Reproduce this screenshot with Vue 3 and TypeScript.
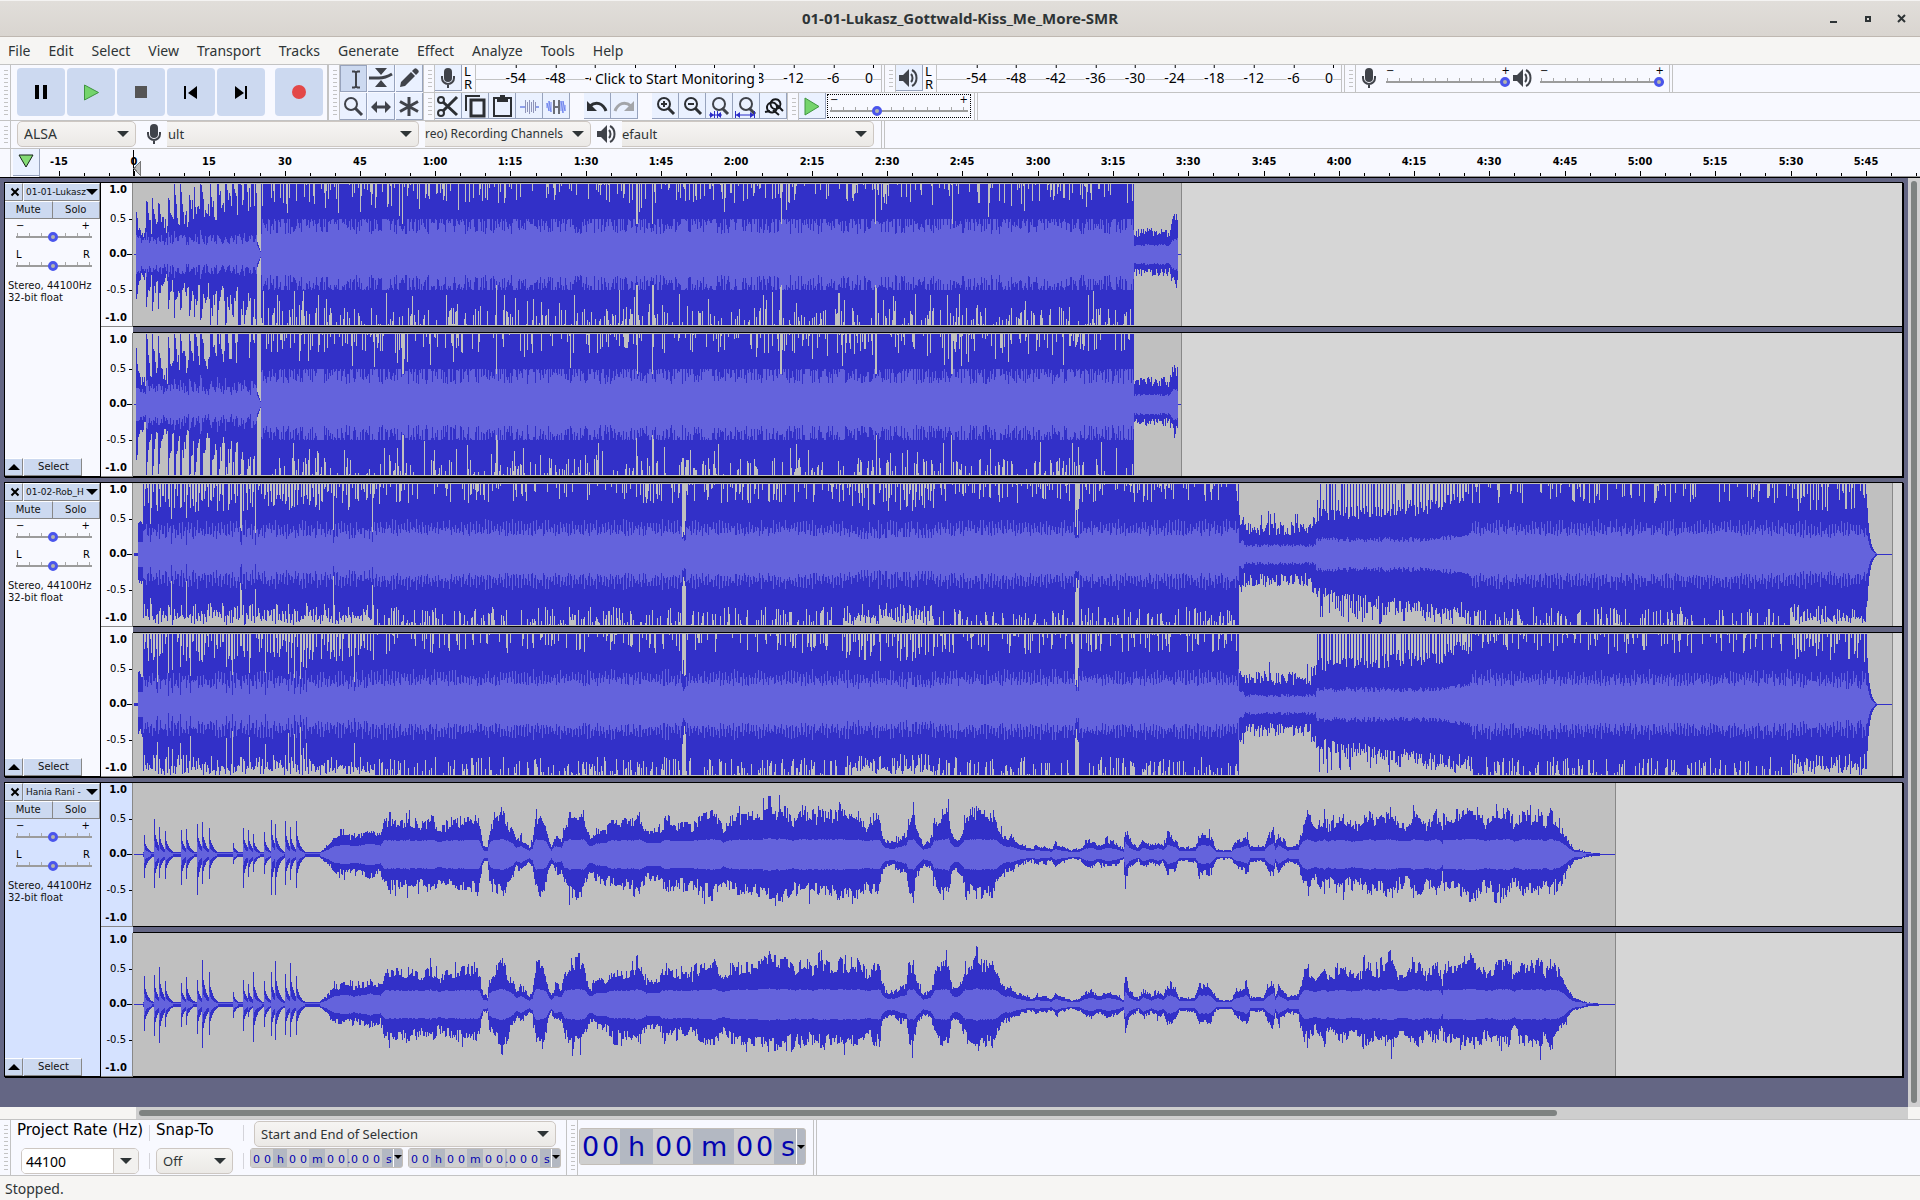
<script setup lang="ts">
import { defineComponent, h } from 'vue'

/* ---------- icons ---------- */
type Shape = { d: string; fill?: string; stroke?: string; w?: number }
const dark = '#40434a'
const icons: Record<string, Shape[]> = {
  ibeam: [{ d: 'M11 5.500h3M16 5.500h3M11 21.500h3M16 21.500h3M15 6v15M13.500 5.500l1.500 1l1.500-1M13.500 21.500l1.500-1l1.500 1', stroke: dark, w: 2 }],
  envelope: [
    { d: 'M7 3h12l-6 7zM7 22h12l-6-7z', fill: dark },
    { d: 'M1 13h10c5 0 8-1 13-4', stroke: dark, w: 3 },
  ],
  draw: [{ d: 'M4 22l1-5L15 7l4 4L9 21zM16 6l2-2c1-1 2-1 3 0l1 1c1 1 1 2 0 3l-2 2z', fill: dark }],
  zoom: [
    { d: 'M17 11a6 6 0 1 1-12 0a6 6 0 1 1 12 0z', stroke: dark, w: 2 },
    { d: 'M15 15l7 7', stroke: dark, w: 3 },
  ],
  shift: [
    { d: 'M6 14h14', stroke: dark, w: 3 },
    { d: 'M9 8v12l-6-6zM17 8v12l6-6z', fill: dark },
  ],
  multi: [{ d: 'M13 4v19M4 8.500l18 10M4 18.500l18-10', stroke: dark, w: 3 }],
  mic: [
    { d: 'M9 7a4 4 0 0 1 8 0v6a4 4 0 0 1-8 0z', fill: dark },
    { d: 'M7 11v2a6 6 0 0 0 12 0v-2M13 19v4', stroke: dark, w: 2 },
  ],
  speaker: [
    { d: 'M3 10h4l6-6v18l-6-6H3z', fill: dark },
    { d: 'M15 9c2 2 2 6 0 8M16 5c6 3 6 13 0 16', stroke: dark, w: 2 },
  ],
  cut: [
    { d: 'M9 7a3 3 0 1 1-6 0a3 3 0 1 1 6 0zM9 20a3 3 0 1 1-6 0a3 3 0 1 1 6 0z', stroke: '#2c2f33', w: 2 },
    { d: 'M8 9l14 13M8 18L22 4', stroke: '#2c2f33', w: 3 },
  ],
  copy: [
    { d: 'M9 7h13v16H9z', stroke: '#2c2f33', w: 3 },
    { d: 'M4 18V3h14', stroke: '#2c2f33', w: 2 },
  ],
  paste: [
    { d: 'M5 5h17v18H5z', stroke: '#2c2f33', w: 2 },
    { d: 'M8 5h11v4H8zM11 2h5v4h-5z', fill: '#2c2f33' },
  ],
  trim: [
    { d: 'M4 14h5M19 14h4', stroke: '#8ea0ec', w: 2 },
    { d: 'M9.500 7v13M11.500 9v10M13.500 7v14M15.500 9v10M17.500 7v13M19.500 9v9', stroke: '#8f94b8', w: 1 },
  ],
  silence: [
    { d: 'M4 15v-5l2 8V8l2 11V9M18 18V8l2 12V8l2 10v-6', stroke: '#6f84ee', w: 1 },
    { d: 'M11 7v14M16 7v14', stroke: '#6a6d76', w: 2 },
    { d: 'M11 14h5', stroke: '#6a6d76', w: 2 },
  ],
  undo: [
    { d: 'M6 13c6-5 13-3 16 5', stroke: '#2c2f33', w: 3 },
    { d: 'M3 8v10h10z', fill: '#2c2f33' },
  ],
  redo: [
    { d: 'M20 13c-6-5-13-3-16 5', stroke: '#a3a5a9', w: 3 },
    { d: 'M23 8v10H13z', fill: '#a3a5a9' },
  ],
  zoomin: [
    { d: 'M18 11a6 6 0 1 1-12 0a6 6 0 1 1 12 0zM9 11h6M12 8v6', stroke: '#2c2f33', w: 2 },
    { d: 'M16 15l6 6', stroke: '#2c2f33', w: 3 },
  ],
  zoomout: [
    { d: 'M18 11a6 6 0 1 1-12 0a6 6 0 1 1 12 0zM9 11h6', stroke: '#2c2f33', w: 2 },
    { d: 'M16 15l6 6', stroke: '#2c2f33', w: 3 },
  ],
  zoomsel: [
    { d: 'M19 11a6 6 0 1 1-12 0a6 6 0 1 1 12 0z', stroke: dark, w: 2 },
    { d: 'M16 15l6 6', stroke: dark, w: 3 },
    { d: 'M3 22h13M8.500 18v7M11.500 18v7', stroke: '#2a2cc8', w: 1 },
    { d: 'M4 19v6l4-3zM15 19v6l-4-3z', fill: '#2a2cc8' },
  ],
  zoomfit: [
    { d: 'M19 11a6 6 0 1 1-12 0a6 6 0 1 1 12 0z', stroke: dark, w: 2 },
    { d: 'M16 15l6 6', stroke: dark, w: 3 },
    { d: 'M3 22h18M2.500 18v7M21.500 18v7', stroke: '#2a2cc8', w: 1 },
    { d: 'M7 19v6l-4-3zM17 19v6l4-3z', fill: '#2a2cc8' },
  ],
  zoomtoggle: [
    { d: 'M20 9a5 5 0 1 1-9 0a5 5 0 0 1 9 0zM17 14a5 5 0 1 1-10 1a5 5 0 0 1 10-1z', stroke: '#17191c', w: 2 },
    { d: 'M17 12l6 6M10 18l-5 1M13 17l6 5', stroke: '#17191c', w: 2 },
  ],
  play: [{ d: 'M6 5l14 8.500l-14 8.500z', fill: '#74d46c', stroke: '#3f9440', w: 1 }],
  pin: [{ d: 'M6 6h14l-7 12z', fill: '#84dc74', stroke: '#17251a', w: 1 }],
}

const Icon = defineComponent({
  props: { name: { type: String, required: true } },
  setup(props) {
    return () =>
      h(
        'svg',
        { width: 26, height: 26, viewBox: '0 0 26 26', 'aria-hidden': 'true', style: 'display:block;flex:none' },
        icons[props.name].map((s) =>
          h('path', { d: s.d, fill: s.fill ?? 'none', stroke: s.stroke ?? 'none', 'stroke-width': s.w ?? 0 }),
        ),
      )
  },
})

/* ---------- toolbars ---------- */
const menus = ['File', 'Edit', 'Select', 'View', 'Transport', 'Tracks', 'Generate', 'Effect', 'Analyze', 'Tools', 'Help']
const tools = [
  ['ibeam', 'Selection'], ['envelope', 'Envelope'], ['draw', 'Draw'],
  ['zoom', 'Zoom'], ['shift', 'Time shift'], ['multi', 'Multi-tool'],
]
const editGroups = [
  [['cut', 'Cut'], ['copy', 'Copy'], ['paste', 'Paste'], ['trim', 'Trim'], ['silence', 'Silence']],
  [['undo', 'Undo'], ['redo', 'Redo']],
  [['zoomin', 'Zoom in'], ['zoomout', 'Zoom out'], ['zoomsel', 'Fit selection'], ['zoomfit', 'Fit project'], ['zoomtoggle', 'Zoom toggle']],
]
const decibels = [-54, -48, -42, -36, -30, -24, -18, -12, -6, 0]
/* marks that sit fully behind the monitoring prompt carry no figure */
const covered = [-36, -30, -24]

/* ---------- timeline ---------- */
const PX_PER_SEC = 5.02
const ORIGIN = 95
const clock = (s: number) => (s < 60 ? String(s) : `${Math.floor(s / 60)}:${String(s % 60).padStart(2, '0')}`)
const marks = Array.from({ length: 25 }, (_, i) => (i - 1) * 15).map((s) => ({
  x: Math.round(ORIGIN + s * PX_PER_SEC),
  text: clock(s),
}))
const minorTicks = Array.from({ length: 75 }, (_, i) => (i - 3) * 5)
  .filter((s) => s % 15 !== 0)
  .map((s) => Math.round(ORIGIN + s * PX_PER_SEC))
const tickPath =
  marks.map((m) => `M${m.x} 22v5`).join('') + minorTicks.map((x) => `M${x} 24v3`).join('')

/* ---------- waveforms ---------- */
type Column = { up: number; down: number; rms: number }
type Random = () => number
const FULL = 70

function random(seed: number): Random {
  let a = seed
  return () => {
    a = (a + 0x6d2b79f5) | 0
    let t = Math.imul(a ^ (a >>> 15), 1 | a)
    t = (t + Math.imul(t ^ (t >>> 7), 61 | t)) ^ t
    return ((t ^ (t >>> 14)) >>> 0) / 4294967296
  }
}

function curve(points: number[][], x: number): number {
  for (let i = 1; i < points.length; i++) {
    if (x <= points[i][0]) {
      const [x0, y0] = points[i - 1]
      const [x1, y1] = points[i]
      return y0 + ((y1 - y0) * (x - x0)) / (x1 - x0)
    }
  }
  return 0
}

function clipped(r: Random, gap: number, low: number): number {
  return r() < gap ? (low + (1 - low) * r()) * FULL : FULL
}

/* loud pop master: short percussive intro, then a clipped body and a quiet tail */
const popHits = [2, 12, 18, 24, 34, 40, 46, 55, 60, 66, 76, 83, 91, 98, 104, 110, 117, 121]
function popTrack(seed: number, hot: number): Column[] {
  const r = random(seed)
  const out: Column[] = []
  const breaks = [268, 362, 502, 518, 646, 741, 817]
  for (let x = 0; x < 1048; x++) {
    if (x < 2) out.push({ up: 0, down: 0, rms: 0 })
    else if (x < 123) {
      const floor = 15 + x * 0.2
      let hit = 0
      popHits.forEach((p, i) => {
        if (x >= p) hit = Math.max(hit, (38 + ((i * 17) % 22)) * hot * Math.exp(-(x - p) / 2.4))
      })
      const up = Math.min(FULL, floor * (0.85 + 0.8 * r()) + hit * (0.7 + x / 300))
      out.push({ up, down: Math.min(FULL, floor * (0.8 + 0.7 * r()) + hit * 0.8), rms: 8 + r() * 10 + hit * 0.15 })
    } else if (x < 127) {
      const v = 12 * (127 - x) / 4
      out.push({ up: v, down: v, rms: v * 0.7 })
    } else if (x < 1000) {
      const thin = breaks.some((b) => x >= b && x < b + 2)
      const up = thin && r() < 0.6 ? 30 : clipped(r, 0.3, r() < 0.2 ? 0.5 : 0.72)
      const down = thin && r() < 0.6 ? 30 : clipped(r, 0.34, r() < 0.3 ? 0.5 : 0.75)
      out.push({ up, down, rms: Math.min(up, r() < 0.75 ? 20 + r() * 15 : 35) })
    } else if (x < 1044) {
      const base = x < 1034 ? 20 : x < 1040 ? 16 + (x - 1034) * 3 : 31
      out.push({ up: base * (0.85 + 0.5 * r()), down: base * (0.65 + 0.45 * r()), rms: base * (0.4 + 0.12 * r()) })
    } else out.push({ up: 0, down: 0, rms: 0 })
  }
  return out
}

/* steady beat: a clipped body with a dropout, a breakdown and a hard fade */
function beatTrack(seed: number): Column[] {
  const r = random(seed)
  const out: Column[] = []
  for (let x = 0; x < 1758; x++) {
    const sparse = x < 240 || (x > 710 && x < 800) || x > 1657
    const beat = x % 3 === 0 || r() < (x < 240 ? 0.2 : 0.3)
    const pulse = x % 3 === 0 ? 8 : 0
    if (x < 4) out.push({ up: 1, down: 1, rms: 0 })
    else if (x < 9) out.push({ up: 26 + r() * 8, down: 24 + r() * 8, rms: 12 })
    else if ((x >= 548 && x < 552) || (x >= 941 && x < 945)) out.push({ up: 46 - r() * 30, down: 40 - r() * 20, rms: 12 + r() * 6 })
    else if (x < 1105 || (x >= 1337 && x < 1733)) {
      const dip = x < 240 && !beat && r() < 0.08
      let up = clipped(r, 0.3, 0.72)
      let down = clipped(r, 0.38, 0.74)
      let rms = 18 + pulse + r() * 9
      if (sparse) {
        up = beat ? FULL : 42 + r() * 26
        down = beat ? 60 + r() * 10 : 48 + r() * 18
        rms = 15 + pulse + r() * 11
      }
      if (dip) {
        up = 20 + r() * 18
        down = 20 + r() * 24
        rms = 8 + r() * 6
      }
      out.push({ up, down, rms })
    } else if (x < 1182) {
      const edge = x < 1110 ? 8 : 0
      const bump = x > 1176 ? 6 : 0
      out.push({ up: 19 + edge + bump + r() * 13 + (r() < 0.06 ? 12 : 0), down: 18 + edge + bump + r() * 14, rms: 7 + edge / 2 + r() * 3 })
    } else {
      const base = 32 + (x - 1182) * 0.06
      const late = x > 1310 ? 8 : 0
      const up = x % 3 === 1 || r() < 0.12 ? (r() < 0.85 ? FULL : 54) : base + late + r() * 14
      const down = r() < 0.45 ? 46 + r() * 24 : base + (x - 1182) * 0.08 + r() * 14
      out.push({ up, down: Math.min(FULL, down), rms: 12 + (x > 1300 ? (x - 1300) * 0.15 : 0) + r() * 5 })
    }
    if (x >= 1733) {
      const v = x < 1743 ? 46 * Math.exp(-(x - 1733) / 2.6) : 0
      out[x] = { up: v, down: v, rms: v * 0.4 }
    }
  }
  return out
}

/* piano piece: separate notes first, then a breathing body */
const notesL = [[10, 19, 23], [20, 35, 33], [25, 27, 23], [31, 23, 24], [47, 24, 30], [52, 25, 24], [63, 30, 40], [68, 32, 29], [75, 26, 24], [99, 11, 9], [109, 26, 33], [114, 24, 22], [119, 20, 17], [130, 22, 19], [137, 34, 40], [141, 30, 40], [151, 33, 30], [156, 27, 25], [162, 33, 33]]
const notesR = [[10, 28, 26], [20, 29, 31], [25, 37, 38], [31, 23, 22], [47, 21, 22], [52, 27, 20], [63, 24, 29], [68, 44, 43], [75, 32, 30], [99, 12, 13], [109, 24, 26], [114, 20, 12], [119, 32, 37], [130, 23, 22], [137, 32, 31], [141, 43, 35], [151, 30, 30], [156, 41, 32], [162, 28, 30]]
const swell = [
  [185, 2], [192, 8], [200, 18], [212, 21], [220, 17], [235, 24], [246, 19], [251, 36], [262, 34], [275, 35], [287, 30], [297, 38], [304, 28],
  [316, 32], [331, 37], [343, 36], [346, 25], [349, 8], [353, 8], [355, 25], [360, 35], [368, 45], [374, 30], [378, 24], [382, 14], [386, 18], [391, 12], [395, 8], [398, 12],
  [401, 35], [406, 45], [411, 33], [414, 18], [417, 8], [420, 18], [427, 15], [430, 30], [435, 40], [440, 44], [447, 44], [451, 30], [455, 18], [458, 18], [461, 24], [471, 26],
  [481, 35], [495, 33], [505, 40], [512, 25], [525, 25], [532, 38], [544, 30], [558, 30], [568, 38], [580, 42], [589, 27], [597, 38], [612, 40], [621, 40], [634, 46], [651, 46],
  [660, 35], [670, 46], [677, 36], [689, 44], [699, 38], [705, 46], [714, 38], [723, 43], [732, 30], [740, 40], [744, 42], [748, 20], [751, 13], [760, 12], [764, 16], [772, 20],
  [774, 38], [779, 44], [782, 25], [789, 10], [796, 14], [800, 30], [805, 40], [814, 44], [816, 24], [820, 15], [825, 18], [832, 38], [840, 46], [849, 42], [859, 42], [864, 28],
  [869, 18], [876, 17], [883, 12], [891, 8], [898, 6], [903, 10], [907, 7], [912, 8], [917, 5], [921, 12], [927, 8], [937, 4], [946, 6], [951, 12], [958, 15], [963, 8], [973, 14],
  [983, 10], [989, 5], [991, 28], [995, 14], [1004, 6], [1009, 15], [1017, 8], [1024, 14], [1029, 8], [1033, 20], [1041, 16], [1045, 6], [1054, 7], [1061, 8], [1065, 20], [1075, 20],
  [1079, 12], [1082, 5], [1097, 4], [1100, 12], [1106, 15], [1113, 20], [1116, 8], [1123, 7], [1130, 8], [1134, 18], [1139, 25], [1141, 10], [1144, 20], [1148, 14], [1153, 8],
  [1160, 9], [1164, 10], [1166, 20], [1169, 32], [1173, 35], [1181, 27], [1189, 37], [1193, 27], [1207, 40], [1217, 28], [1226, 32], [1233, 42], [1243, 34], [1258, 45], [1264, 30],
  [1273, 30], [1278, 40], [1285, 42], [1292, 30], [1302, 42], [1306, 30], [1308, 22], [1309, 38], [1318, 35], [1325, 38], [1335, 46], [1345, 44], [1351, 30], [1358, 38], [1373, 45],
  [1380, 28], [1387, 42], [1396, 38], [1406, 44], [1411, 32], [1416, 44], [1422, 32], [1429, 24], [1434, 14], [1439, 6], [1446, 4], [1453, 2], [1460, 1], [1470, 0],
]
function pianoTrack(seed: number, notes: number[][]): Column[] {
  const r = random(seed)
  const out: Column[] = []
  let wobble = 1
  let wobbleDown = 1
  for (let x = 0; x < 1481; x++) {
    if (x < 185) {
      let up = x < 9 ? 0 : 2
      let down = up
      for (const [p, a, b] of notes) {
        if (x >= p) {
          const k = 0.7 * Math.exp(-(x - p) / 4) + (x === p ? 0.3 : 0)
          up = Math.max(up, a * k)
          down = Math.max(down, b * k)
        }
      }
      out.push({ up, down, rms: Math.min(up, down) * 0.4 })
      continue
    }
    if (r() < 0.75) wobble = 0.74 + 0.34 * r() + (r() < 0.13 ? 0.22 : 0)
    if (r() < 0.75) wobbleDown = 0.7 + 0.34 * r() + (r() < 0.13 ? 0.22 : 0)
    const base = curve(swell, x)
    const core = Math.min(base * 0.44, 10 + base * 0.11)
    out.push({ up: base * wobble, down: base * wobbleDown, rms: core * (0.8 + 0.2 * wobble) })
  }
  return out
}

const MID = 71
const bars = (cols: Column[], up: (c: Column) => number, down: (c: Column) => number) =>
  cols.map((c, x) => `M${x + 1} ${MID - Math.round(up(c))}h1V${MID + 1 + Math.round(down(c))}h-1z`).join('')

function channel(cols: Column[]) {
  return {
    peak: bars(cols, (c) => c.up, (c) => c.down),
    rms: bars(cols, (c) => c.rms, (c) => (c.rms < 1 ? -1 : c.rms)),
  }
}
const tracks = [
  { id: 1, name: '01-01-Lukasz', selected: false, width: 1049, channels: [channel(popTrack(11, 0.85)), channel(popTrack(27, 1.4))] },
  { id: 2, name: '01-02-Rob_H', selected: false, width: 1760, channels: [channel(beatTrack(5)), channel(beatTrack(8))] },
  { id: 3, name: 'Hania Rani -', selected: true, width: 1483, channels: [channel(pianoTrack(3, notesL)), channel(pianoTrack(9, notesR))] },
]
const scale = ['1.0', '0.5', '0.0', '-0.5', '-1.0']

/* ---------- time fields ---------- */
const bigTime = [['00', 'd'], ['h', 'h'], ['00', 'd'], ['m', 'm'], ['00', 'd'], ['s', 's']]
const longTime = [...bigTime.slice(0, 5), ['.', 'p'], ['000', 'd'], ['s', 's']]
</script>

<template>
  <div class="app">
    <header class="titlebar">
      <h1>01-01-Lukasz_Gottwald-Kiss_Me_More-SMR</h1>
      <div class="winbtns">
        <button aria-label="Minimize"><svg width="10" height="10"><path d="M1 8h7" stroke="#2e3436" stroke-width="2" /></svg></button>
        <button aria-label="Maximize"><svg width="10" height="10"><path d="M3 3h4v4H3z" fill="none" stroke="#2e3436" stroke-width="2" /></svg></button>
        <button aria-label="Close"><svg width="10" height="10"><path d="M1 1l7 7M8 1l-7 7" stroke="#2e3436" stroke-width="2" /></svg></button>
      </div>
    </header>

    <nav class="menubar">
      <button v-for="m in menus" :key="m">{{ m }}</button>
    </nav>

    <section class="dock">
      <div class="bar transport">
        <span class="grip"></span>
        <div class="tbtns">
          <button aria-label="Pause"><svg width="48" height="48"><path d="M18 17h4v14h-4zM26 17h4v14h-4z" /></svg></button>
          <button aria-label="Play"><svg width="48" height="48"><path d="M17.500 17l14 7.500l-14 7.500z" fill="#74d46c" stroke="#3f9440" /></svg></button>
          <button aria-label="Stop"><svg width="48" height="48"><path d="M18 18h12v12H18z" fill="#555" /></svg></button>
          <button aria-label="Skip to start"><svg width="48" height="48"><path d="M17 18h2v13h-2zM30 18v13l-9-6z" /></svg></button>
          <button aria-label="Skip to end"><svg width="48" height="48"><path d="M28 18h2v13h-2zM18 18v13l9-6z" /></svg></button>
          <button class="rec" aria-label="Record"><svg width="48" height="48"><circle cx="24" cy="24" r="7" fill="#e34848" /></svg></button>
        </div>
      </div>
      <div class="bar toolbox">
        <span class="grip"></span>
        <div class="tgrid">
          <button v-for="(t, i) in tools" :key="t[0]" class="ib" :class="{ on: i === 0 }" :aria-label="t[1]"><Icon :name="t[0]" /></button>
        </div>
      </div>
      <div class="rows">
        <div class="row">
          <div class="bar meterbar">
            <span class="grip"></span>
            <button class="ib" aria-label="Record meter"><Icon name="mic" /></button>
            <div class="lr"><span>L</span><span>R</span></div>
            <div class="meter">
              <span class="line"></span>
              <div class="dbs">
                <span v-for="d in decibels" :key="d" class="db" :style="{ left: ((d + 60) / 60) * 100 + '%' }">{{ covered.includes(d) ? '' : d }}</span>
              </div>
              <button class="monitor">Click to Start Monitoring</button>
            </div>
          </div>
          <div class="bar meterbar">
            <span class="grip"></span>
            <button class="ib" aria-label="Playback meter"><Icon name="speaker" /></button>
            <div class="lr"><span>L</span><span>R</span></div>
            <div class="meter">
              <span class="line"></span>
              <div class="dbs">
                <span v-for="d in decibels" :key="d" class="db" :style="{ left: ((d + 60) / 60) * 100 + '%' }">{{ d }}</span>
              </div>
            </div>
          </div>
          <div class="bar mixer">
            <span class="grip"></span>
            <Icon name="mic" />
            <label class="slide vol"><span class="pm"><i>−</i><i>+</i></span><input type="range" min="0" max="100" value="100" aria-label="Recording volume" /></label>
            <Icon name="speaker" />
            <label class="slide vol"><span class="pm"><i>−</i><i>+</i></span><input type="range" min="0" max="100" value="100" aria-label="Playback volume" /></label>
          </div>
        </div>
        <div class="row">
          <div class="bar editbar">
            <span class="grip"></span>
            <div v-for="(g, i) in editGroups" :key="i" class="group">
              <button v-for="b in g" :key="b[0]" class="ib" :aria-label="b[1]"><Icon :name="b[0]" /></button>
            </div>
          </div>
          <div class="bar speed">
            <span class="grip"></span>
            <button class="ib" aria-label="Play at speed"><Icon name="play" /></button>
            <label class="slide focus"><span class="pm"><i>−</i><i>+</i></span><input type="range" min="0" max="100" value="33" aria-label="Playback speed" /></label>
          </div>
        </div>
      </div>
    </section>

    <section class="devices">
      <span class="grip"></span>
      <span class="sel host"><select aria-label="Audio host"><option>ALSA</option></select></span>
      <Icon name="mic" />
      <span class="sel cut input"><select aria-label="Recording device"><option>ult</option></select></span>
      <span class="sel cut chan"><select aria-label="Recording channels"><option>reo) Recording Channels</option></select></span>
      <Icon name="speaker" />
      <span class="sel cut output"><select aria-label="Playback device"><option>efault</option></select></span>
      <span class="devend"></span>
    </section>

    <section class="timeline">
      <span class="side"></span>
      <button class="ib pin" aria-label="Pinned play head"><Icon name="pin" /></button>
      <div class="ruler">
        <svg class="ticks" width="1880" height="27" shape-rendering="crispEdges">
          <path :d="tickPath" transform="translate(0.5 0)" stroke="#000" />
          <path d="M94.500 1v26" stroke="#000" />
          <path d="M101 13v13l-6-6.500z" fill="#bbb" stroke="#777" />
        </svg>
        <span v-for="m in marks" :key="m.text" class="mark" :style="{ left: m.x + 'px' }">{{ m.text }}</span>
      </div>
    </section>

    <main class="work">
      <div class="tracks">
        <article v-for="t in tracks" :key="t.id" class="track" :class="{ selected: t.selected }">
          <div class="panel">
            <div class="phead">
              <button class="close" aria-label="Close track"><svg width="10" height="10"><path d="M1.500 1.500l7 7M8.500 1.500l-7 7" stroke="#000" stroke-width="2" /></svg></button>
              <button class="name"><span>{{ t.name }}</span><i class="down"></i></button>
            </div>
            <div class="ms"><button>Mute</button><button>Solo</button></div>
            <label class="slide ps"><span class="pm"><i>−</i><i>+</i></span><input type="range" min="0" max="100" value="48" aria-label="Gain" /></label>
            <label class="slide ps"><span class="pm"><i>L</i><i>R</i></span><input type="range" min="0" max="100" value="48" aria-label="Pan" /></label>
            <p>Stereo, 44100Hz<br />32-bit float</p>
            <div class="pfoot">
              <button class="fold" aria-label="Collapse"><i class="up"></i></button>
              <button class="select">Select</button>
            </div>
          </div>
          <div class="channels">
            <div v-for="(c, i) in t.channels" :key="i" class="channel">
              <div class="vr">
                <span v-for="s in scale" :key="s" :class="{ half: s.endsWith('5'), zero: s === '0.0' }">{{ s }}</span>
              </div>
              <div class="lane">
                <div class="clip" :style="{ width: t.width + 'px' }">
                  <svg :width="t.width" height="143" shape-rendering="crispEdges">
                    <path :d="c.peak" fill="#3230c8" />
                    <path :d="c.rms" fill="#6463dc" />
                  </svg>
                </div>
              </div>
            </div>
          </div>
        </article>
      </div>
      <div class="vscroll"><span></span></div>
    </main>
    <div class="hscroll"><div class="rail"><span></span></div></div>

    <section class="bottom">
      <div class="bar selbar">
        <span class="grip"></span>
        <div class="cell rate">
          <label for="rate">Project Rate (Hz)</label>
          <div class="combo"><input id="rate" type="text" value="44100" /><button aria-label="Choose rate"><i class="down"></i></button></div>
        </div>
        <span class="seps"><i></i><i></i></span>
        <div class="cell snap">
          <label for="snap">Snap-To</label>
          <span class="sel"><select id="snap"><option>Off</option></select></span>
        </div>
        <span class="seps"><i></i><i></i></span>
        <div class="cell range">
          <span class="sel"><select aria-label="Selection mode"><option>Start and End of Selection</option></select></span>
          <div class="times">
            <div v-for="n in 2" :key="n" class="time">
              <span v-for="(p, i) in longTime" :key="i" class="part" :class="p[1]"><b v-for="(ch, k) in p[0]" :key="k">{{ ch }}</b></span>
              <button aria-label="Time format"><i class="down"></i></button>
            </div>
          </div>
        </div>
      </div>
      <div class="bar timebar">
        <span class="grip"></span>
        <div class="time big">
          <span v-for="(p, i) in bigTime" :key="i" class="part" :class="p[1]"><b v-for="(ch, k) in p[0]" :key="k">{{ ch }}</b></span>
          <button aria-label="Time format"><i class="down"></i></button>
        </div>
      </div>
    </section>

    <footer class="status">Stopped.</footer>
  </div>
</template>

<style>
body {
  margin: 0;
}
</style>

<style scoped>
* {
  box-sizing: border-box;
}
.app {
  display: flex;
  flex-direction: column;
  min-height: 100vh;
  overflow: hidden;
  background: #f8f9ff;
  color: #2e3436;
  font: 14px 'Noto Sans', sans-serif;
}
button {
  margin: 0;
  padding: 0;
  border: 0;
  background: none;
  color: inherit;
  font: inherit;
}
i {
  font-style: normal;
}
.down,
.up {
  display: block;
  flex: none;
  width: 0;
  height: 0;
  border: 6px solid transparent;
}
.down {
  border-top-color: #000;
  border-bottom: 0;
}
.up {
  border-bottom-color: #000;
  border-top: 0;
}

.titlebar {
  position: relative;
  display: flex;
  align-items: center;
  justify-content: center;
  height: 37px;
  border-top: 1px solid #f4f3f2;
  border-bottom: 1px solid #bfb8b1;
  background: linear-gradient(#e1deda, #d9d5d0);
}
.titlebar h1 {
  margin: 0;
  padding-bottom: 2px;
  font-size: 15px;
  font-weight: 700;
}
.winbtns {
  position: absolute;
  right: 13px;
  display: flex;
  gap: 24px;
}
.winbtns svg {
  display: block;
}
.menubar {
  display: flex;
  gap: 18px;
  height: 27px;
  padding-left: 8px;
  background: #f6f5f3;
}

.grip {
  flex: none;
  width: 11px;
  align-self: stretch;
  border-right: 1px solid #c3c3c3;
  background: repeating-linear-gradient(#c3c3c3 0 1px, transparent 1px 4px) 4px 5px / 4px calc(100% - 8px) no-repeat;
}
.bar {
  display: flex;
  border-right: 1px solid #c3c3c3;
}
.dock {
  display: flex;
  height: 57px;
  border-top: 1px solid #c3c3c3;
  border-bottom: 1px solid #c3c3c3;
}
.transport {
  width: 329px;
  border-right-width: 2px;
}
.tbtns {
  display: flex;
  gap: 2px;
  padding: 3px 0 0 6px;
}
.tbtns button {
  width: 48px;
  height: 48px;
  border-radius: 4px;
  background: #ccd9f0;
}
.tbtns svg {
  display: block;
}
.tbtns .rec {
  margin-left: 8px;
}
.toolbox {
  width: 95px;
}
.tgrid {
  display: grid;
  grid-template-columns: repeat(3, 27px);
  gap: 1px;
}
.ib {
  flex: none;
  width: 27px;
  height: 27px;
  overflow: hidden;
  background: #eaf1ff;
  border-right: 1px solid #97a3bd;
  border-bottom: 1px solid #97a3bd;
}
.ib.on {
  background: #ccd9f0;
  border: 1px solid #97a3bd;
}
.rows {
  flex: 1;
}
.row {
  display: flex;
  height: 28px;
}
.row:first-child {
  border-bottom: 1px solid #c3c3c3;
}
.row .ib {
  height: 26px;
}
.meterbar {
  width: 460px;
  border-right: 4px double #c3c3c3;
}
.meterbar:first-child {
  width: 461px;
}
.lr {
  display: flex;
  flex-direction: column;
  width: 13px;
  padding-left: 2px;
  color: #000;
  font-size: 13px;
  line-height: 13px;
}
.meter {
  position: relative;
  flex: 1;
  padding-right: 8px;
  border-left: 1px solid #c3c3c3;
  color: #000;
}
.meter .line {
  position: absolute;
  left: 0;
  right: 0;
  top: 14px;
  height: 1px;
  background: #c3c3c3;
}
.dbs {
  position: relative;
  height: 26px;
}
.db {
  position: absolute;
  top: 4px;
  transform: translateX(-50%);
  line-height: 18px;
  background: #f8f9ff;
}
.db::before {
  content: '';
  position: absolute;
  left: 50%;
  top: -4px;
  width: 1px;
  height: 3px;
  background: #000;
}
.db:last-child {
  transform: translateX(-100%);
}
.db:last-child::before {
  left: 100%;
}
.monitor {
  position: absolute;
  left: 115px;
  top: 4px;
  padding: 0 4px;
  background: #f8f9ff;
  line-height: 20px;
  white-space: nowrap;
}
.slide {
  display: flex;
  flex-direction: column;
  flex: none;
}
.pm {
  display: flex;
  justify-content: space-between;
  color: #000;
  font: 10px/10px 'DejaVu Sans', sans-serif;
}
.slide input {
  appearance: none;
  width: 100%;
  height: 12px;
  margin: 0;
  background:
    linear-gradient(#9c9c9c, #9c9c9c) 0 5px / 100% 2px no-repeat,
    repeating-linear-gradient(to right, #a8a8a8 0 1px, transparent 1px 12px) 1px 2px / calc(100% - 2px) 3px no-repeat;
}
.slide input::-webkit-slider-thumb {
  appearance: none;
  width: 10px;
  height: 10px;
  border: 3px solid #4a55ec;
  border-radius: 50%;
  background: #b5b5ac;
}
.mixer {
  width: 328px;
  border-right: 4px double #c3c3c3;
}
.vol {
  width: 124px;
  margin-left: 4px;
  padding-top: 1px;
}
.editbar {
  width: 364px;
}
.group {
  display: flex;
}
.group + .group {
  margin-left: 14px;
}
.speed {
  width: 190px;
  border-right: 4px double #c3c3c3;
}
.focus {
  width: 144px;
  height: 24px;
  margin: 1px;
  padding: 0 2px;
  border: 1px dotted #000;
}

.devices {
  display: flex;
  height: 28px;
  border-bottom: 1px solid #c3c3c3;
}
.sel {
  position: relative;
  display: block;
  height: 26px;
}
.sel select {
  appearance: none;
  width: 100%;
  height: 26px;
  margin: 0;
  padding: 0 0 1px 6px;
  border: 1px solid #cdc7c2;
  border-radius: 5px;
  background: linear-gradient(#f6f5f3, #ebe9e6);
  color: #2e3436;
  font: 13px 'Noto Sans', sans-serif;
}
.sel::after {
  content: '';
  position: absolute;
  right: 7px;
  top: 10px;
  border: 6px solid transparent;
  border-top-color: #2e3436;
  border-bottom: 0;
}
.host {
  width: 119px;
  margin: 0 5px 0 6px;
}
.host select {
  font-size: 14px;
}
.cut select {
  padding-left: 1px;
  border-left: 0;
  border-radius: 0 5px 5px 0;
}
.input {
  width: 252px;
}
.chan {
  width: 166px;
  margin: 0 3px 0 6px;
}
.chan select {
  padding-left: 0;
  font-size: 12px;
}
.output {
  width: 252px;
  margin-left: 2px;
}
.output select {
  padding-left: 0;
}
.devend {
  width: 11px;
  border-right: 4px double #c3c3c3;
}

.timeline {
  display: flex;
  height: 29px;
  border-bottom: 1px solid #000;
}
.side {
  width: 11px;
  border-right: 1px solid #c3c3c3;
}
.pin {
  margin-left: 2px;
}
.ruler {
  position: relative;
  flex: 1;
  height: 28px;
  margin-left: -1px;
  overflow: hidden;
  border-bottom: 1px solid #999;
}
.ticks {
  display: block;
}
.mark {
  position: absolute;
  top: 6px;
  transform: translateX(-50%);
  color: #000;
  font: 700 11px/14px 'DejaVu Sans Condensed', 'DejaVu Sans', sans-serif;
}

.work {
  display: flex;
  flex: 1;
}
.tracks {
  flex: 1;
  display: flex;
  flex-direction: column;
  gap: 5px;
  min-width: 0;
  padding: 4px 5px 0 4px;
  background: #646684;
}
.track {
  display: flex;
  height: 295px;
  border: 1px solid #000;
  background: #f8f9ff;
  box-shadow: 1px 1px 0 #000;
}
.track.selected {
  background: #d5e2ff;
}
.panel {
  display: flex;
  flex-direction: column;
  flex: none;
  width: 96px;
  border-right: 1px solid #000;
  color: #111;
  font: 10px/12px 'DejaVu Sans', sans-serif;
}
.panel button {
  background: #ccd9f0;
  border-top: 1px solid #fff;
  border-right: 1px solid #888;
  border-bottom: 1px solid #888;
}
.phead,
.ms {
  display: flex;
  height: 18px;
}
.close {
  display: flex;
  align-items: center;
  justify-content: center;
  width: 18px;
  padding-left: 2px;
}
.name {
  display: flex;
  align-items: center;
  flex: 1;
  margin-left: 1px;
  padding-left: 2px;
  white-space: nowrap;
}
.name span {
  width: 60px;
  font-size: 9px;
  text-align: left;
}
.ms button {
  flex: 1;
}
.ps {
  width: 76px;
  margin: 1px 0 5px 11px;
}
.ps .pm {
  padding: 1px 2px 0 0;
}
.panel p {
  margin: 3px 0 0 3px;
  white-space: nowrap;
}
.pfoot {
  display: flex;
  gap: 1px;
  height: 18px;
  margin-top: auto;
}
.fold {
  display: flex;
  align-items: center;
  justify-content: center;
  width: 18px;
}
.select {
  width: 58px;
  padding-left: 2px;
}
.channels {
  flex: 1;
  min-width: 0;
  display: flex;
  flex-direction: column;
  gap: 7px;
}
.channel {
  display: flex;
  height: 143px;
}
.vr {
  flex: none;
  display: grid;
  grid-template-rows: 13px 46px 24px 48px 12px;
  align-items: center;
  width: 32px;
  border-right: 1px solid #888;
  box-shadow: 0 1px 0 #888;
  color: #000;
  font: 700 10px/12px 'DejaVu Sans', sans-serif;
  text-align: right;
}
.vr span {
  position: relative;
  padding-right: 5px;
}
.vr span:last-child {
  align-self: start;
  margin-top: -2px;
}
.vr .half {
  padding-right: 6px;
  font-weight: 400;
}
.vr .half::after,
.vr .zero::after {
  content: '';
  position: absolute;
  right: 0;
  top: 6px;
  width: 3px;
  height: 1px;
  background: #000;
}
.vr .zero::after {
  width: 5px;
}
.lane {
  flex: 1;
  min-width: 0;
  overflow: hidden;
  background: #d6d6d6;
}
.channel:first-child .lane {
  overflow: visible;
  box-shadow: 0 1px 0 #000, 0 6px 0 #646684, 0 7px 0 #000;
}
.clip {
  background: #c0c0c0;
  border-right: 1px solid #888;
  max-width: 100%;
  height: 143px;
  overflow: hidden;
}
.clip svg {
  display: block;
}

.vscroll {
  width: 12px;
  padding: 3px 3px 4px;
  background: #d0cfd0;
}
.vscroll span {
  display: block;
  height: 100%;
  border-radius: 3px;
  background: #7e8281;
}
.hscroll {
  display: flex;
  height: 12px;
  padding: 0 12px 0 136px;
  background: #f6f5f3;
}
.rail {
  flex: 1;
  padding: 3px;
  background: #cecece;
}
.rail span {
  display: block;
  width: 80.3%;
  height: 6px;
  border-radius: 3px;
  background: #7e8281;
}

.bottom {
  display: flex;
  height: 57px;
  border-top: 1px solid #c3c3c3;
  border-bottom: 1px solid #c3c3c3;
}
.cell {
  display: flex;
  flex-direction: column;
  padding-top: 1px;
}
.cell label {
  height: 27px;
  color: #000;
  font: 15px/18px 'DejaVu Sans', sans-serif;
  white-space: nowrap;
}
.selbar {
  width: 567px;
}
.rate {
  width: 128px;
  margin-left: 6px;
}
.combo {
  display: flex;
  width: 118px;
  height: 26px;
  margin-left: 4px;
  border: 1px solid #cdc7c2;
  border-radius: 5px;
  overflow: hidden;
}
.combo input {
  flex: 1;
  min-width: 0;
  padding: 0 4px;
  border: 0;
  background: #fff;
  color: #000;
  font: 14px 'Noto Sans', sans-serif;
}
.combo button {
  display: flex;
  align-items: center;
  justify-content: center;
  width: 25px;
  border-left: 1px solid #cdc7c2;
  background: #f2f1ef;
}
.combo .down {
  border-top-color: #2e3436;
}
.seps {
  display: flex;
  flex-direction: column;
  gap: 12px;
  width: 11px;
  padding: 5px 0 0 4px;
}
.seps i {
  width: 1px;
  height: 16px;
  background: #d4d4da;
}
.snap {
  width: 77px;
}
.snap + .seps {
  margin-left: 6px;
}
.range {
  width: 314px;
}
.range .sel {
  width: 302px;
  margin-left: 4px;
}
.times {
  display: flex;
  gap: 5px;
  margin-top: 1px;
}
.time {
  display: flex;
  width: 153px;
  height: 20px;
  border: 1px solid #c3beb8;
  border-radius: 3px;
  background: #b3b8c2;
  color: #0202b0;
  font: 11px/15px 'DejaVu Sans', sans-serif;
}
.time b {
  flex: none;
  width: 11px;
  padding: 3px 0 0 2px;
  font-weight: 400;
}
.part {
  display: flex;
}
.part.d {
  background: #cfcfcf;
}
.part.h b {
  width: 14px;
  padding-left: 4px;
}
.part.m b {
  width: 16px;
  padding-left: 3px;
}
/* the decimal point hangs over the digits that follow it */
.part.p {
  position: relative;
  z-index: 1;
}
.part.p b {
  width: 2px;
  padding-left: 0;
}
.part.s b {
  width: 11px;
  padding-left: 4px;
}
.time button {
  display: flex;
  justify-content: center;
  flex: 1;
  padding-top: 6px;
  border-left: 1px solid #fff;
}
.time .down {
  border-width: 4px 4px 0;
}
.timebar {
  width: 250px;
  border-right: 4px double #c3c3c3;
}
.time.big {
  width: 227px;
  height: 37px;
  margin: 8px 0 0 1px;
  font-size: 27px;
  line-height: 34px;
}
.big b {
  padding-top: 1px;
}
.big button {
  padding-top: 16px;
}
.big .part.d b {
  width: 20px;
}
.big .part.h b {
  width: 33px;
  padding-left: 8px;
}
.big .part.m b {
  width: 41px;
  padding-left: 8px;
}
.big .part.s b {
  width: 22px;
  padding-left: 7px;
}
.status {
  height: 24px;
  padding-left: 5px;
  background: #f6f5f3;
  line-height: 25px;
}
</style>
